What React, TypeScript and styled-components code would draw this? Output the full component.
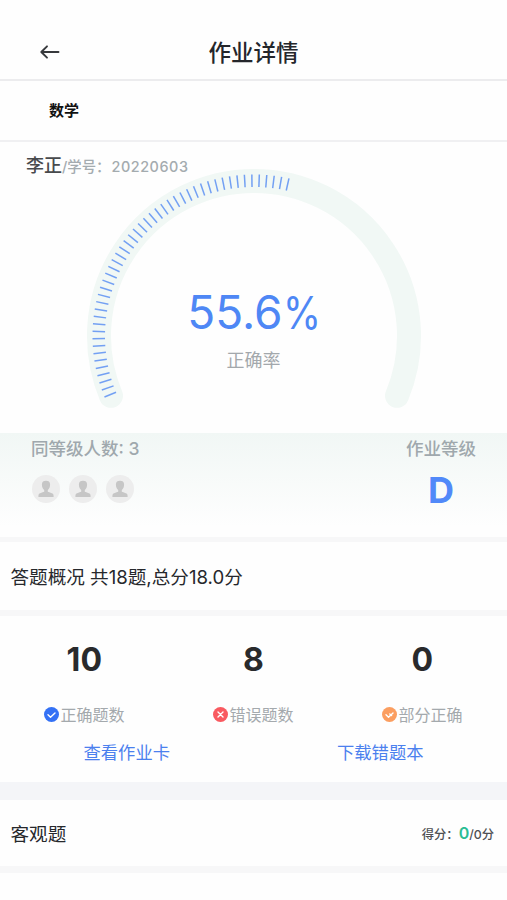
import React from 'react';
import styled, { createGlobalStyle } from 'styled-components';

const GlobalStyle = createGlobalStyle`
  * { box-sizing: border-box; }
  body {
    margin: 0;
    background: #fefefe;
    font-family: Inter, "Noto Sans CJK SC", sans-serif;
    color: #26282c;
  }
`;

const Page = styled.main`
  width: 100%;
  height: 900px;
  display: flex;
  flex-direction: column;
  overflow: hidden;
`;

const Header = styled.header`
  height: 81px;
  flex: none;
  display: grid;
  grid-template-columns: 100px 1fr 100px;
  align-items: center;
  padding-top: 25px;
  border-bottom: 2px solid #ececee;
`;

const BackButton = styled.button`
  border: 0;
  padding: 0;
  background: none;
  height: 24px;
  width: 24px;
  margin-left: 38px;
  svg { display: block; }
`;

const Title = styled.h1`
  margin: 0;
  padding-top: 2px;
  text-align: center;
  font-size: 22.5px;
  line-height: 32px;
  font-weight: 500;
  color: #24262b;
`;

const SubjectBar = styled.div`
  height: 61px;
  flex: none;
  padding: 18px 49px 0;
  border-bottom: 2px solid #f0f0f2;
  font-size: 15px;
  line-height: 24px;
  font-weight: 700;
  color: #111;
`;

const GaugePanel = styled.section`
  height: 291px;
  flex: none;
  display: grid;
`;

const Student = styled.div`
  grid-area: 1 / 1;
  padding: 11px 26px;
  display: flex;
  align-items: baseline;
  height: 40px;
  line-height: 26px;
  font-size: 14.4px;
  font-weight: 500;
  color: #a4abaf;
  white-space: pre;
`;

const StudentName = styled.strong`
  font-size: 18px;
  font-weight: 500;
  color: #484a4d;
`;

const StudentNumber = styled.span`
  letter-spacing: 0.55px;
  margin-left: 1px;
`;

const GaugeDrawing = styled.svg`
  grid-area: 1 / 1;
  display: block;
`;

const GaugeReading = styled.div`
  grid-area: 1 / 1;
  padding-top: 141px;
  display: flex;
  flex-direction: column;
  align-items: center;
`;

const Rate = styled.div`
  font-size: 46px;
  line-height: 58px;
  font-weight: 400;
  color: #4e87f5;
`;

const Percent = styled.span`
  display: inline-block;
  font-size: 45px;
  line-height: 1;
  width: 37px;
  transform: scaleX(0.86);
  transform-origin: left;
`;

const RateLabel = styled.div`
  margin-top: 7px;
  font-size: 18px;
  line-height: 26px;
  color: #a3a8ac;
`;

const LevelPanel = styled.section`
  height: 104px;
  flex: none;
  display: flex;
  justify-content: space-between;
  padding: 2px 31px 0;
  background: linear-gradient(#f1f7f5, #fefefe 90%);
`;

const LevelColumn = styled.div<{ $centered?: boolean }>`
  display: flex;
  flex-direction: column;
  align-items: ${(p) => (p.$centered ? 'center' : 'flex-start')};
`;

const LevelLabel = styled.div`
  font-size: 17.5px;
  line-height: 27px;
  font-weight: 500;
  color: #9fa8ad;
`;

const Avatars = styled.div`
  display: flex;
  gap: 9px;
  margin: 13px 0 0 1px;
`;

const Grade = styled.div`
  font-size: 36px;
  line-height: 44px;
  margin-top: 6px;
  font-weight: 700;
  color: #5189f9;
`;

const Divider = styled.div<{ $height: number; $color?: string }>`
  flex: none;
  height: ${(p) => p.$height}px;
  background: ${(p) => p.$color ?? '#f7f7f8'};
`;

const SectionBar = styled.div<{ $height: number }>`
  height: ${(p) => p.$height}px;
  flex: none;
  padding: 2px 13px 0 10.5px;
  display: flex;
  align-items: center;
  justify-content: space-between;
`;

const SectionTitle = styled.h2`
  margin: 0;
  font-size: 18.6px;
  line-height: 28px;
  font-weight: 400;
`;

const Score = styled.div`
  font-size: 12.3px;
  line-height: 20px;
  font-weight: 500;
  color: #4d4f52;
`;

const Earned = styled.span`
  font-size: 16px;
  font-weight: 600;
  color: #2bbd93;
`;

const Summary = styled.section`
  height: 166px;
  flex: none;
`;

const Stats = styled.div`
  display: grid;
  grid-template-columns: repeat(3, 1fr);
  padding-top: 24px;
`;

const Stat = styled.div`
  display: flex;
  flex-direction: column;
  align-items: center;
`;

const StatValue = styled.div`
  font-size: 32px;
  line-height: 40px;
  letter-spacing: 0.4px;
  font-weight: 700;
  color: #292a2c;
`;

const StatLabel = styled.div`
  display: flex;
  align-items: center;
  gap: 1.5px;
  margin: 23px 0.5px 0 0;
  font-size: 16px;
  line-height: 24px;
  color: #a4a9ad;
  svg { display: block; margin-top: -2px; }
`;

const Links = styled.div`
  display: grid;
  grid-template-columns: 1fr 1fr;
  margin-top: 13px;
`;

const LinkButton = styled.button`
  border: 0;
  padding: 0;
  background: none;
  font: 400 17.3px/26px Inter, "Noto Sans CJK SC", sans-serif;
  color: #4b80ee;
`;

const CX = 254;
const CY = 194;
const point = (radius: number, degrees: number) => {
  const a = (degrees * Math.PI) / 180;
  return [CX + radius * Math.cos(a), CY + radius * Math.sin(a)];
};
const TICK_COUNT = 48;
const TICK_START = 157.8;
const TICK_SWEEP = 124.7;

function Gauge() {
  const [x1, y1] = point(155, 157.3);
  const [x2, y2] = point(155, 22.7);
  return (
    <GaugeDrawing width="507" height="291" viewBox="0 0 507 291">
      <path d={`M${x1} ${y1} A155 155 0 1 1 ${x2} ${y2}`} fill="none" stroke="#f1f8f5" strokeWidth="24" strokeLinecap="round" />
      {Array.from({ length: TICK_COUNT }, (_, i) => {
        const angle = TICK_START + (TICK_SWEEP * i) / (TICK_COUNT - 1);
        const [ax, ay] = point(149, angle);
        const [bx, by] = point(161.5, angle);
        return <line key={i} x1={ax} y1={ay} x2={bx} y2={by} stroke="#73a0f3" strokeWidth="1.5" />;
      })}
    </GaugeDrawing>
  );
}

function Avatar() {
  return (
    <svg width="28" height="28" viewBox="0 0 28 28">
      <circle cx="14" cy="14" r="14" fill="#ededed" />
      <path d="M9.9 9.5C9.9 6.8 11.5 5.8 14 5.8s4.1 1 4.1 3.7c0 2.3-.8 4.4-2.3 5.6v1.7c2 .9 5 1.3 5.6 2.8.2.6.2 1.8.2 2.4H6.4c0-.6 0-1.8.2-2.4.6-1.5 3.6-1.9 5.6-2.8v-1.7c-1.5-1.2-2.3-3.3-2.3-5.6z" fill="#c6c6c6" />
    </svg>
  );
}

type MarkKind = 'right' | 'wrong' | 'partial';
const markColors: Record<MarkKind, string> = { right: '#3471f5', wrong: '#f95a60', partial: '#fb9e60' };
const markPaths: Record<MarkKind, string> = {
  right: 'M4 7.8l2.5 2.4L11 5.9',
  wrong: 'M5 5l5 5M10 5l-5 5',
  partial: 'M4 7.8l2.5 2.4L11 5.9M7.8 6.9l1.8 1.6',
};

function Mark({ kind }: { kind: MarkKind }) {
  return (
    <svg width="15" height="15" viewBox="0 0 15 15">
      <circle cx="7.5" cy="7.5" r="7.5" fill={markColors[kind]} />
      <path d={markPaths[kind]} fill="none" stroke="#fff" strokeWidth="1.4" strokeLinecap="round" strokeLinejoin="round" />
    </svg>
  );
}

const stats: { value: number; label: string; kind: MarkKind }[] = [
  { value: 10, label: '正确题数', kind: 'right' },
  { value: 8, label: '错误题数', kind: 'wrong' },
  { value: 0, label: '部分正确', kind: 'partial' },
];

export default function App() {
  return (
    <Page lang="zh-CN">
      <GlobalStyle />
      <Header>
        <BackButton aria-label="返回">
          <svg width="24" height="24" viewBox="0 0 24 24" fill="none" stroke="#37393c" strokeWidth="1.9" strokeLinecap="round" strokeLinejoin="round">
            <path d="M20.5 12H3.5M9 6.3L3.3 12 9 17.7" />
          </svg>
        </BackButton>
        <Title>作业详情</Title>
      </Header>
      <SubjectBar>数学</SubjectBar>
      <GaugePanel>
        <Gauge />
        <Student>
          <StudentName>李正</StudentName>/学号：<StudentNumber>20220603</StudentNumber>
        </Student>
        <GaugeReading>
          <Rate>55.6<Percent>%</Percent></Rate>
          <RateLabel>正确率</RateLabel>
        </GaugeReading>
      </GaugePanel>
      <LevelPanel>
        <LevelColumn>
          <LevelLabel>同等级人数: 3</LevelLabel>
          <Avatars>
            <Avatar />
            <Avatar />
            <Avatar />
          </Avatars>
        </LevelColumn>
        <LevelColumn $centered>
          <LevelLabel>作业等级</LevelLabel>
          <Grade>D</Grade>
        </LevelColumn>
      </LevelPanel>
      <Divider $height={5} />
      <SectionBar $height={68}>
        <SectionTitle>答题概况 共18题,总分18.0分</SectionTitle>
      </SectionBar>
      <Divider $height={6} />
      <Summary>
        <Stats>
          {stats.map((s) => (
            <Stat key={s.label}>
              <StatValue>{s.value}</StatValue>
              <StatLabel>
                <Mark kind={s.kind} />
                {s.label}
              </StatLabel>
            </Stat>
          ))}
        </Stats>
        <Links>
          <LinkButton>查看作业卡</LinkButton>
          <LinkButton>下载错题本</LinkButton>
        </Links>
      </Summary>
      <Divider $height={18} $color="#f4f5f8" />
      <SectionBar $height={66}>
        <SectionTitle>客观题</SectionTitle>
        <Score>
          得分：<Earned>0</Earned>/0分
        </Score>
      </SectionBar>
      <Divider $height={7} />
    </Page>
  );
}
